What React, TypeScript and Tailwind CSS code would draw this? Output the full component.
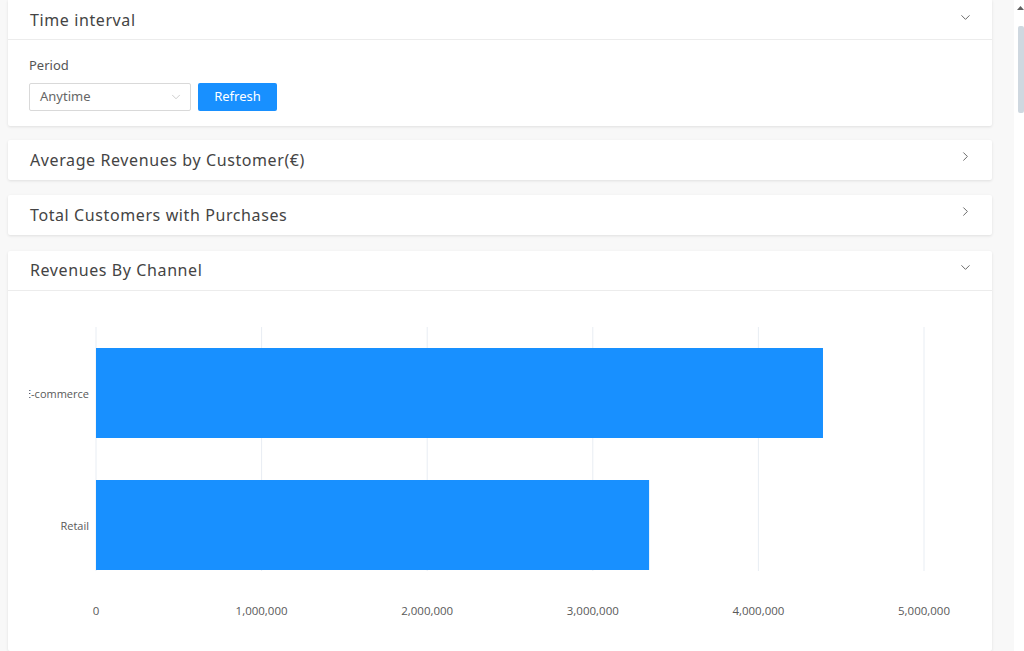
import React from "react";
import { ChevronDown, ChevronRight } from "lucide-react";

const ticks = [0, 1000000, 2000000, 3000000, 4000000, 5000000];
const bars = [
  { label: "E-commerce", value: 4390000 },
  { label: "Retail", value: 3340000 },
];

function Panel({
  title,
  open,
  first,
  children,
}: {
  title: string;
  open?: boolean;
  first?: boolean;
  children?: React.ReactNode;
}) {
  return (
    <div className="bg-white rounded-[2px] shadow-[0_1px_3px_rgba(0,0,0,0.1)]">
      <div
        className={`${first ? "h-[41px] pt-[2px]" : "h-10"} flex items-center justify-between pl-[22px] pr-[19px] ${
          open ? "border-b border-[#ececec]" : ""
        }`}
      >
        <span className="text-[16px] text-[#444] tracking-[0.6px]">{title}</span>
        {open ? (
          <ChevronDown className="w-[15px] h-[15px] text-[#555] mt-[-6px]" strokeWidth={1.4} />
        ) : (
          <ChevronRight className="w-[15px] h-[15px] text-[#555] mt-[-6px]" strokeWidth={1.4} />
        )}
      </div>
      {children}
    </div>
  );
}

function Chart() {
  const x0 = 67;
  const step = 165.6;
  const scale = step / 1000000;
  return (
    <svg width="941" height="360" className="block" style={{ fontFamily: "'Open Sans', sans-serif" }}>
      {ticks.map((t, i) => (
        <line
          key={t}
          x1={x0 + i * step}
          x2={x0 + i * step}
          y1={36}
          y2={280}
          stroke="#e8edf3"
          strokeWidth={1}
        />
      ))}
      {bars.map((b, i) => {
        const y = 57 + i * 132;
        return (
          <g key={b.label}>
            <rect x={x0} y={y} width={b.value * scale} height={90} fill="#1890ff" />
            <text x={x0 - 7} y={y + 50} textAnchor="end" fontSize="11" fill="#595959">
              {b.label}
            </text>
          </g>
        );
      })}
      {ticks.map((t, i) => (
        <text
          key={t}
          x={x0 + i * step}
          y={324}
          textAnchor="middle"
          fontSize="11.5"
          fill="#595959"
        >
          {t.toLocaleString("en-US")}
        </text>
      ))}
    </svg>
  );
}

export default function App() {
  return (
    <div
      className="w-[1024px] h-[651px] overflow-hidden bg-[#f8f8f8] flex"
      style={{ fontFamily: "'Noto Sans', sans-serif" }}
    >
      <div className="flex-1 flex flex-col gap-[15px] pl-2 pr-[22px] mt-[-1px]">
        <Panel title="Time interval" open first>
          <div className="px-[21px] pt-[16px] pb-[15px]">
            <div className="text-[13px] text-[#555] mb-[7px]">Period</div>
            <div className="flex items-center gap-[7px]">
              <div className="w-[162px] h-[28px] border border-[#d9d9d9] rounded-[2px] flex items-center justify-between pl-[10px] pr-[7px]">
                <span className="text-[13px] text-[#666]">Anytime</span>
                <ChevronDown className="w-[14px] h-[14px] text-[#bbb]" strokeWidth={1.25} />
              </div>
              <button className="h-[28px] w-[79px] bg-[#1890ff] text-white text-[13px] rounded-[2px]">
                Refresh
              </button>
            </div>
          </div>
        </Panel>
        <div className="mt-[-1px]">
          <Panel title="Average Revenues by Customer(€)" />
        </div>
        <Panel title="Total Customers with Purchases" />
        <div className="mt-[1px]">
          <Panel title="Revenues By Channel" open>
            <div className="pl-[21px] overflow-hidden">
              <Chart />
            </div>
          </Panel>
        </div>
      </div>
      <div className="w-[10px] bg-white flex flex-col items-end">
        <div className="h-[26px] w-[7px] flex justify-center pt-[5px]">
          <svg width="7" height="5" viewBox="0 0 7 5">
            <path d="M0 5 L3.5 1 L7 5 Z" fill="#606060" />
          </svg>
        </div>
        <div className="w-[6px] h-[87px] bg-[#cfd8e0] rounded-[2px]" />
      </div>
    </div>
  );
}
